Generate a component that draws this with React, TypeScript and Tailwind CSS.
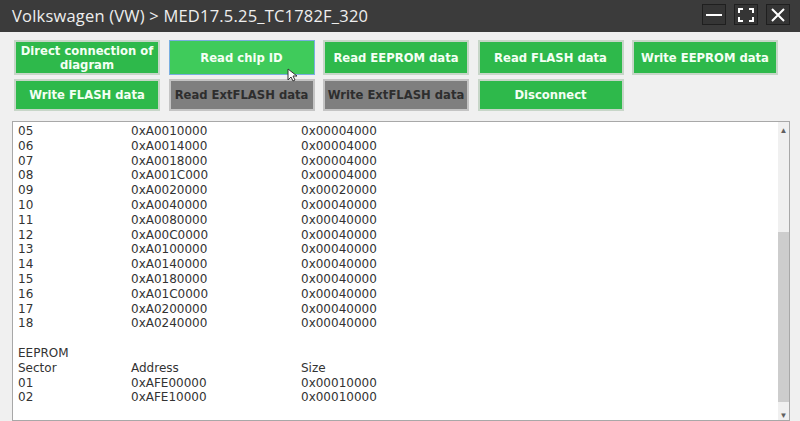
import React from "react"

const flash = [
  ["05", "0xA0010000", "0x00004000"],
  ["06", "0xA0014000", "0x00004000"],
  ["07", "0xA0018000", "0x00004000"],
  ["08", "0xA001C000", "0x00004000"],
  ["09", "0xA0020000", "0x00020000"],
  ["10", "0xA0040000", "0x00040000"],
  ["11", "0xA0080000", "0x00040000"],
  ["12", "0xA00C0000", "0x00040000"],
  ["13", "0xA0100000", "0x00040000"],
  ["14", "0xA0140000", "0x00040000"],
  ["15", "0xA0180000", "0x00040000"],
  ["16", "0xA01C0000", "0x00040000"],
  ["17", "0xA0200000", "0x00040000"],
  ["18", "0xA0240000", "0x00040000"],
]

const eeprom = [
  ["Sector", "Address", "Size"],
  ["01", "0xAFE00000", "0x00010000"],
  ["02", "0xAFE10000", "0x00010000"],
]

function Btn({ label, kind = "green", h = "h-[35px]" }: { label: React.ReactNode; kind?: "green" | "gray" | "active"; h?: string }) {
  const cls =
    kind === "gray"
      ? "bg-[#7f7f7f] text-[#2e2e2e] border-2 border-[#c4c4c4]"
      : kind === "active"
        ? "bg-[#3fcb5b] text-[#f4fff4] border border-[#79aee0]"
        : "bg-[#2eb94b] text-[#f4fff4] border-2 border-[#c7d6c8]"
  return (
    <button
      className={`w-[146px] ${h} ${cls} text-[11.6px] font-bold leading-[14px] flex items-center justify-center text-center`}
      style={{ fontFamily: '"DejaVu Sans", sans-serif' }}
    >
      {label}
    </button>
  )
}

function Row({ cells }: { cells: string[] }) {
  return (
    <div className="flex h-[14.8px] items-center">
      <span className="w-[113px]">{cells[0]}</span>
      <span className="w-[170px]">{cells[1]}</span>
      <span>{cells[2]}</span>
    </div>
  )
}

export default function App() {
  return (
    <div className="w-[800px] h-[421px] overflow-hidden bg-[#f0f0f0] flex flex-col" style={{ fontFamily: '"Open Sans", sans-serif' }}>
      {/* title bar */}
      <div className="h-[32px] bg-[#3b3b3b] flex items-center pl-[12px] pr-[10px] shrink-0">
        <span className="text-[16.5px] text-[#eeeeee] tracking-[0.2px]">Volkswagen (VW) &gt; MED17.5.25_TC1782F_320</span>
        <div className="ml-auto flex gap-[8px] mb-[3px]">
          <div className="w-[24px] h-[21px] border border-[#1f1f1f] bg-[#353535] flex items-center justify-center">
            <div className="w-[16px] h-[2px] bg-white" />
          </div>
          <div className="w-[24px] h-[21px] border border-[#1f1f1f] bg-[#353535] flex items-center justify-center">
            <svg width="16" height="14" viewBox="0 0 16 14" fill="none" stroke="white" strokeWidth="2">
              <path d="M1 5V1h4M11 1h4v4M15 9v4h-4M5 13H1V9" />
            </svg>
          </div>
          <div className="w-[24px] h-[21px] border border-[#1f1f1f] bg-[#353535] flex items-center justify-center">
            <svg width="16" height="16" viewBox="0 0 16 16" stroke="white" strokeWidth="2">
              <path d="M2 2l12 12M14 2L2 14" />
            </svg>
          </div>
        </div>
      </div>

      {/* buttons */}
      <div className="pl-[14px] pt-[8px] flex flex-col gap-[4px]">
        <div className="flex gap-[8.5px]">
          <Btn label={<>Direct connection of<br />diagram</>} />
          <div className="relative">
            <Btn label="Read chip ID" kind="active" />
            <svg className="absolute left-[118px] top-[28px]" width="10" height="14" viewBox="0 0 10 14">
              <path d="M1 1v11l3-3 2 4 2-1-2-4h4z" fill="white" stroke="#333" strokeWidth="1" />
            </svg>
          </div>
          <Btn label="Read EEPROM data" />
          <Btn label="Read FLASH data" />
          <Btn label="Write EEPROM data" />
        </div>
        <div className="flex gap-[8.5px]">
          <Btn label="Write FLASH data" h="h-[32px]" />
          <Btn label="Read ExtFLASH data" kind="gray" h="h-[32px]" />
          <Btn label="Write ExtFLASH data" kind="gray" h="h-[32px]" />
          <Btn label="Disconnect" h="h-[32px]" />
        </div>
      </div>

      {/* log area */}
      <div className="mt-[10px] ml-[12px] mr-[10px] flex-1 bg-white border border-[#a8a8a8] flex min-h-0">
        <div
          className="flex-1 pl-[5px] pt-[2px] text-[12px] text-[#333333] leading-[14.8px]"
          style={{ fontFamily: '"DejaVu Sans", sans-serif' }}
        >
          {flash.map((r) => (
            <Row key={r[0]} cells={r} />
          ))}
          <div className="h-[14.8px]" />
          <div className="h-[14.8px] flex items-center">EEPROM</div>
          {eeprom.map((r) => (
            <Row key={r[0]} cells={r} />
          ))}
        </div>
        <div className="w-[11px] bg-[#f0f0f0] flex flex-col items-center">
          <span className="text-[8px] text-[#606060] leading-[12px] pt-[2px]">▲</span>
          <div className="flex-1 w-full pt-[96px] pb-[8px] flex">
            <div className="w-full bg-[#cdcdcd]" />
          </div>
          <span className="text-[8px] text-[#606060] leading-[10px]">▼</span>
        </div>
      </div>
    </div>
  )
}
